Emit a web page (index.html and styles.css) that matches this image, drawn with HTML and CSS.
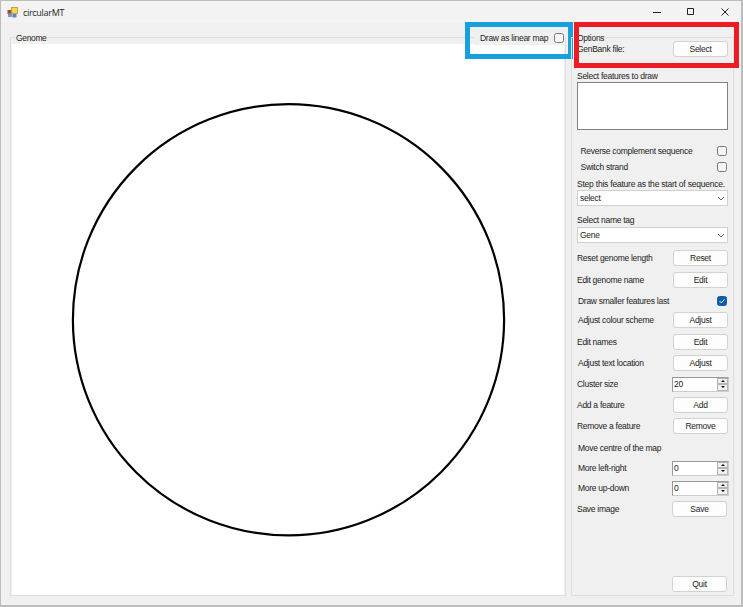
FILE: index.html
```
<!DOCTYPE html>
<html lang="en">
<head>
<meta charset="utf-8">
<title>circularMT</title>
<link rel="stylesheet" href="styles.css">
</head>
<body>
<div class="window">
  <header class="titlebar">
    <svg class="app-icon" width="11" height="11" viewBox="0 0 11 11"><rect x=".5" y="3" width="4.5" height="4" fill="#a4483e"/><rect x="4.5" y=".5" width="6" height="6" fill="#f5d45a" stroke="#b99530" stroke-width=".8"/><rect x="1" y="6.5" width="4" height="3.5" fill="#8197b9"/><rect x="5.5" y="7" width="4" height="3.5" fill="#6185bc"/></svg>
    <h1 class="title">circularMT</h1>
    <svg class="controls" width="80" height="12" viewBox="0 0 80 12" fill="none" stroke="#222" stroke-width="1"><path d="M1 6.5h8M35.5 2.5h6v6h-6zM69.5 2.5l7 7M76.5 2.5l-7 7"/></svg>
  </header>
  <main class="content">
    <section class="group genome">
      <h2 class="legend">Genome</h2>
      <div class="canvas">
        <svg width="552" height="551" viewBox="0 0 552 551"><circle cx="276.5" cy="275.8" r="215.6" fill="none" stroke="#000" stroke-width="2.2"/></svg>
      </div>
      <label class="linear"><span>Draw as linear map</span><span class="check"></span></label>
      <div class="mark mark-blue"></div>
    </section>
    <section class="group options">
      <h2 class="legend">Options</h2>
      <div class="rows">
        <div class="row"><span>GenBank file:</span><button>Select</button></div>
        <div class="row"><span>Select features to draw</span></div>
        <div class="list"></div>
        <div class="row inset"><span>Reverse complement sequence</span><span class="check"></span></div>
        <div class="row inset"><span>Switch strand</span><span class="check"></span></div>
        <div class="row"><span class="wide">Step this feature as the start of sequence.</span></div>
        <div class="combo"><span>select</span><svg width="8" height="5" viewBox="0 0 8 5"><path d="M1 1l3 3 3-3"/></svg></div>
        <div class="row"><span>Select name tag</span></div>
        <div class="combo"><span>Gene</span><svg width="8" height="5" viewBox="0 0 8 5"><path d="M1 1l3 3 3-3"/></svg></div>
        <div class="row"><span>Reset genome length</span><button>Reset</button></div>
        <div class="row"><span>Edit genome name</span><button>Edit</button></div>
        <div class="row nudge"><span>Draw smaller features last</span><span class="check checked"><svg width="8" height="8" viewBox="0 0 8 8"><path d="M1.5 4l1.8 1.8 3.2-3.4"/></svg></span></div>
        <div class="row nudge"><span>Adjust colour scheme</span><button>Adjust</button></div>
        <div class="row"><span>Edit names</span><button>Edit</button></div>
        <div class="row nudge"><span>Adjust text location</span><button>Adjust</button></div>
        <div class="row"><span>Cluster size</span><div class="spin"><span>20</span><i><b class="up"></b><b class="down"></b></i></div></div>
        <div class="row"><span>Add a feature</span><button>Add</button></div>
        <div class="row"><span>Remove a feature</span><button>Remove</button></div>
        <div class="row nudge"><span>Move centre of the map</span></div>
        <div class="row nudge"><span>More left-right</span><div class="spin"><span>0</span><i><b class="up"></b><b class="down"></b></i></div></div>
        <div class="row nudge"><span>More up-down</span><div class="spin"><span>0</span><i><b class="up"></b><b class="down"></b></i></div></div>
        <div class="row"><span>Save image</span><button class="left">Save</button></div>
        <div class="row end"><button class="left">Quit</button></div>
      </div>
      <div class="mark mark-red"></div>
    </section>
  </main>
</div>
</body>
</html>
```
FILE: styles.css
```
* { box-sizing: border-box; }
body {
  margin: 0;
  font: 8.5px/12px "Liberation Sans", Arial, sans-serif;
  letter-spacing: -.28px;
  color: #1c1c1c;
}
.window {
  width: 743px;
  height: 607px;
  display: flex;
  flex-direction: column;
  background: #f0f0f0;
  border: 1px solid #bcbcbc;
  border-right-width: 2px;
  border-bottom-width: 2px;
}
.titlebar {
  height: 22px;
  flex: none;
  display: flex;
  align-items: center;
  background: #f3f3f3;
  padding: 0 9px 0 6px;
}
.app-icon { margin-right: 5px; }
.title { margin: 1px 0 0; font: 9px/12px "Open Sans", sans-serif; letter-spacing: -.3px; }
.controls { margin-left: auto; }
.content {
  flex: 1;
  display: flex;
  gap: 5px;
  padding: 14px 7px 10px 9px;
}
.group { position: relative; border: 1px solid #dedede; }
.legend {
  position: absolute;
  top: -6px;
  left: 4px;
  margin: 0;
  padding: 0 1px;
  background: #f0f0f0;
  font: inherit;
}
.genome { width: 556px; padding: 6px 1px 0; }
.genome .legend { letter-spacing: -.35px; }
.canvas { height: 551px; background: #fff; }
.canvas svg { display: block; }
.linear {
  position: absolute;
  top: -7px;
  right: 0;
  width: 91px;
  height: 14px;
  padding: 0 0 0 6px;
  display: flex;
  align-items: center;
  justify-content: space-between;
  background: #f0f0f0;
}
.options { width: 163px; flex: none; padding: 3px 5px 0; }
.rows {
  display: grid;
  grid-template-columns: 151px;
  grid-template-rows: 27px 14px 61px 16px 17px 14px 22px 15px 23px 22px 21px 19px 22px 21px 21px 21px 21px 22px 20px 20px 21px 75px 16px;
}
.row {
  height: 16px;
  display: flex;
  align-items: center;
  justify-content: space-between;
  white-space: nowrap;
}
.wide { letter-spacing: -.22px; }
.inset { padding-left: 3.5px; }
.nudge { padding-left: 1px; }
.end { justify-content: flex-end; }
button {
  width: 55px;
  height: 16px;
  padding: 0;
  border: 1px solid #d2d2d2;
  border-radius: 3px;
  background: #fdfdfd;
  color: inherit;
  font: inherit;
  letter-spacing: inherit;
}
.left { margin-right: 1px; }
.list { height: 48px; background: #fff; border: 1px solid #828282; }
.check {
  width: 10px;
  height: 10px;
  flex: none;
  margin-right: 1px;
  border: 1px solid #777;
  border-radius: 2.5px;
  background: #f6f6f6;
}
.checked { background: #115ea8; border-color: #115ea8; }
.checked svg { display: block; fill: none; stroke: #fff; }
.combo {
  height: 16px;
  display: flex;
  align-items: center;
  justify-content: space-between;
  padding: 0 2px;
  background: #fff;
  border: 1px solid #d0d0d0;
}
.combo svg { fill: none; stroke: #555; stroke-width: .9; }
.spin {
  width: 57px;
  height: 15px;
  margin-right: -1px;
  display: flex;
  justify-content: space-between;
  padding-left: 1px;
  background: #fff;
  border: 1px solid #999;
  border-right-color: #ccc;
  border-bottom-color: #ccc;
}
.spin i { width: 11px; display: grid; grid-template-rows: 1fr 1fr; }
.spin b {
  display: flex;
  align-items: center;
  justify-content: center;
  background: #f0f0f0;
  border: 1px solid #b5b5b5;
}
.spin b::after { content: ""; border: 2.5px solid transparent; }
.spin .up::after { border-bottom-color: #111; border-top-width: 0; }
.spin .down::after { border-top-color: #111; border-bottom-width: 0; }
.mark { position: absolute; }
.mark-blue { left: 454px; top: -16px; width: 108px; height: 37px; border: 5px solid #16a1dc; }
.mark-red { left: 2px; top: -16px; width: 165px; height: 46px; border: 5px solid #ed1c24; }
```
